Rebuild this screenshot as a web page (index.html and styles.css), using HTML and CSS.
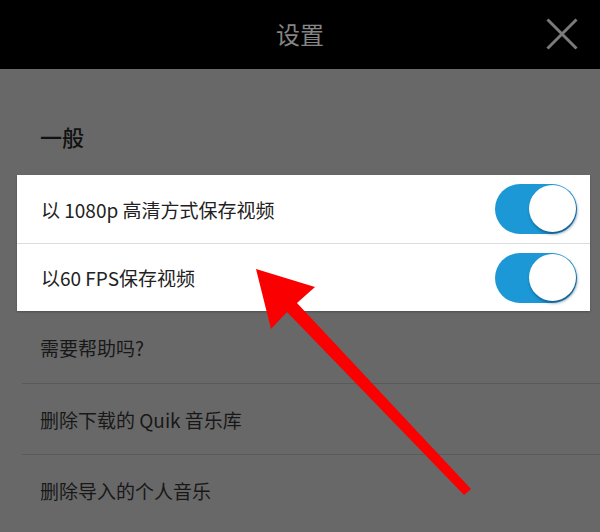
FILE: index.html
```html
<!DOCTYPE html>
<html lang="zh">
<head>
<meta charset="utf-8">
<link rel="stylesheet" href="styles.css">
</head>
<body>
<div class="screen">
  <header class="topbar">
    <div class="title">设置</div>
    <svg class="close" width="32" height="32" viewBox="0 0 32 32">
      <path d="M1.5 1.5 L30.5 30.5 M30.5 1.5 L1.5 30.5" stroke="#7a7a7a" stroke-width="3" fill="none"/>
    </svg>
  </header>
  <main class="content">
    <div class="section-title">一般</div>
    <div class="card">
      <div class="card-row">
        <span class="label">以 1080p 高清方式保存视频</span>
        <span class="toggle"><span class="knob"></span></span>
      </div>
      <div class="card-row">
        <span class="label">以60 FPS保存视频</span>
        <span class="toggle"><span class="knob"></span></span>
      </div>
    </div>
    <div class="list">
      <div class="list-row first"><span class="label">需要帮助吗?</span></div>
      <div class="list-row"><span class="label">删除下载的 Quik 音乐库</span></div>
      <div class="list-row last"><span class="label">删除导入的个人音乐</span></div>
    </div>
  </main>
  <svg class="arrow" width="600" height="532" viewBox="0 0 600 532">
    <polygon points="256,269 315,287 297,303 471,489 464,495 287,312 271,329" fill="#fb0000"/>
  </svg>
</div>
</body>
</html>
```

FILE: styles.css
```css
html, body {
  margin: 0;
  padding: 0;
}
body {
  width: 600px;
  height: 532px;
  overflow: hidden;
  background: #686868;
  font-family: "Noto Sans CJK SC", "Noto Sans", sans-serif;
}
.screen {
  position: relative;
  width: 600px;
  height: 532px;
  display: flex;
  flex-direction: column;
}
.topbar {
  height: 69px;
  background: #000;
  display: flex;
  align-items: center;
  justify-content: center;
  position: relative;
}
.title {
  color: #858585;
  font-size: 24px;
  line-height: 30px;
  margin-top: -2px;
}
.close {
  position: absolute;
  right: 22px;
  top: 18px;
}
.content {
  flex: 1;
  display: flex;
  flex-direction: column;
}
.section-title {
  height: 106px;
  box-sizing: border-box;
  padding: 52px 0 0 40px;
  font-size: 22px;
  line-height: 30px;
  font-weight: 500;
  color: #111;
}
.card {
  margin: 0 10px 0 17px;
  background: #fff;
  box-shadow: 0 1px 2px rgba(0,0,0,0.25);
  display: flex;
  flex-direction: column;
}
.card-row {
  height: 68px;
  display: flex;
  align-items: center;
  justify-content: space-between;
  padding: 0 13px 0 24px;
}
.card-row + .card-row {
  border-top: 1px solid #dcdcdc;
  height: 67px;
}
.card-row .label {
  font-size: 19px;
  color: #222;
}
.toggle {
  width: 82px;
  height: 50px;
  border-radius: 25px;
  background: #1b98d5;
  position: relative;
  flex: none;
}
.knob {
  position: absolute;
  right: 1px;
  top: 1px;
  width: 47px;
  height: 47px;
  border-radius: 50%;
  background: #fff;
  box-shadow: 1px 2px 3px rgba(0, 40, 80, 0.55);
}
.list {
  display: flex;
  flex-direction: column;
}
.list-row {
  margin-left: 22px;
  height: 70px;
  display: flex;
  align-items: center;
  padding-left: 18px;
  border-bottom: 1px solid #5a5a5a;
}
.list-row.first {
  height: 72px;
}
.list-row.last {
  border-bottom: none;
}
.list-row .label {
  font-size: 19px;
  color: #181818;
}
.arrow {
  position: absolute;
  left: 0;
  top: 0;
  pointer-events: none;
}
```
